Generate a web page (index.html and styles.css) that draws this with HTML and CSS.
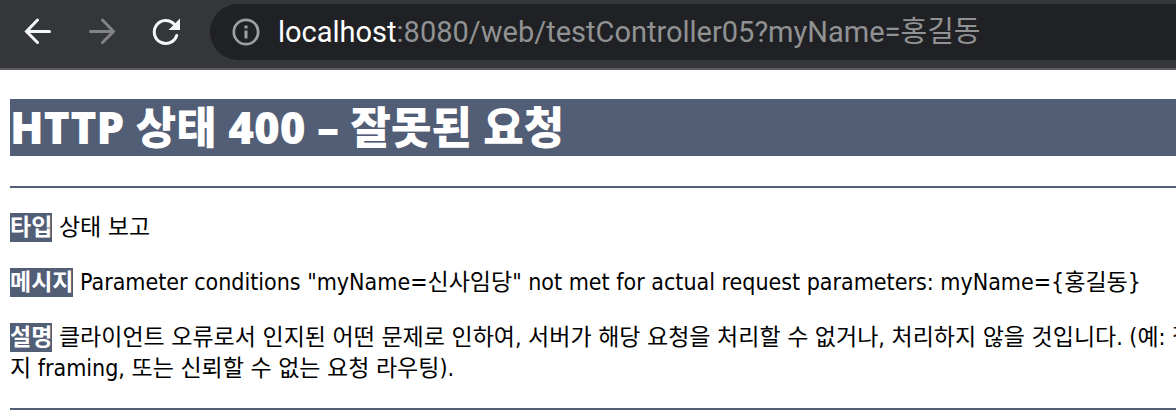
FILE: index.html
```html
<!DOCTYPE html>
<html lang="ko">
<head>
<meta charset="utf-8">
<title>HTTP 상태 400 – 잘못된 요청</title>
<link rel="stylesheet" href="styles.css">
</head>
<body>
<header class="toolbar">
  <nav class="nav">
    <button class="nav-button" type="button" aria-label="뒤로">
      <svg width="28" height="28" viewBox="0 0 28 28" fill="none" stroke="#f5f6f7" stroke-width="3" stroke-linecap="round" stroke-linejoin="miter"><path d="M25.500 13.500H3M13.500 2L2.500 13.500L13.500 24.500"/></svg>
    </button>
    <button class="nav-button" type="button" aria-label="앞으로" disabled>
      <svg width="28" height="28" viewBox="0 0 28 28" fill="none" stroke="#828384" stroke-width="3" stroke-linecap="round" stroke-linejoin="miter"><path d="M2.500 13.500H25M14.500 2L25.500 13.500L14.500 24.500"/></svg>
    </button>
    <button class="nav-button" type="button" aria-label="새로고침">
      <svg width="28" height="28" viewBox="0 0 28 28"><path d="M24.700 17.500A11.500 11.500 0 1 1 22 5.900" fill="none" stroke="#f5f6f7" stroke-width="3" stroke-linecap="round"/><path d="M28 0.500V12H16.500Z" fill="#f5f6f7"/></svg>
    </button>
  </nav>
  <div class="address">
    <button class="info-button" type="button" aria-label="사이트 정보">
      <svg width="28" height="28" viewBox="0 0 28 28"><circle cx="14" cy="14" r="12.200" fill="none" stroke="#9aa0a6" stroke-width="2.700"/><path d="M12.500 7.500h3v3h-3zM12.500 12.600h3v8h-3z" fill="#9aa0a6"/></svg>
    </button>
    <div class="url" role="textbox" aria-label="주소" contenteditable="true" spellcheck="false"><span class="url-host">localhost</span>:8080/web/testController05?myName=홍길동</div>
  </div>
</header>
<main class="report">
  <h1 class="title">HTTP 상태 400 – 잘못된 요청</h1>
  <hr class="line">
  <p class="entry"><b class="tag">타입</b> 상태 보고</p>
  <p class="entry"><b class="tag">메시지</b> Parameter conditions "myName=신사임당" not met for actual request parameters: myName={홍길동}</p>
  <p class="entry"><b class="tag">설명</b> 클라이언트 오류로서 인지된 어떤 문제로 인하여, 서버가 해당 요청을 처리할 수 없거나, 처리하지 않을 것입니다. (예: 잘<br>지 framing, 또는 신뢰할 수 없는 요청 라우팅).</p>
  <hr class="line">
</main>
</body>
</html>
```

FILE: styles.css
```css
body {
  margin: 0;
  background: #fff;
  color: #000;
}

.toolbar {
  display: flex;
  align-items: center;
  padding: 4px 0 8px 24px;
  background: #35363a;
  border-bottom: 2px solid #5b5c60;
}

.nav {
  display: flex;
  gap: 36px;
  margin-right: 30px;
}

.nav-button,
.info-button {
  display: flex;
  flex: none;
  padding: 0;
  border: 0;
  background: none;
}

.address {
  display: flex;
  flex: 1;
  align-items: center;
  gap: 18px;
  min-width: 0;
  height: 56px;
  padding-left: 22px;
  border-radius: 28px 0 0 28px;
  background: #202124;
}

.url {
  font: 29px/56px Roboto, "Noto Sans CJK KR", sans-serif;
  color: #919293;
  white-space: nowrap;
  outline: 0;
}

.url-host {
  color: #fff;
}

.report {
  padding: 29px 0 0 10px;
  overflow: hidden;
  font-family: "DejaVu Sans Condensed", "Noto Sans CJK KR", sans-serif;
}

.title {
  margin: 0 0 30px;
  background: #525d76;
  color: #fff;
  font-family: "Noto Sans", "Noto Sans CJK KR", sans-serif;
  font-size: 44px;
  line-height: 57px;
  font-weight: 900;
  white-space: nowrap;
}

.line {
  height: 2px;
  margin: 24px 0 0;
  border: 0;
  background: #525d76;
}

.entry {
  margin: 24px 0;
  font-size: 23px;
  line-height: 31px;
  white-space: nowrap;
}

.tag {
  display: inline-block;
  height: 29px;
  line-height: 29px;
  background: #525d76;
  color: #fff;
}
```
